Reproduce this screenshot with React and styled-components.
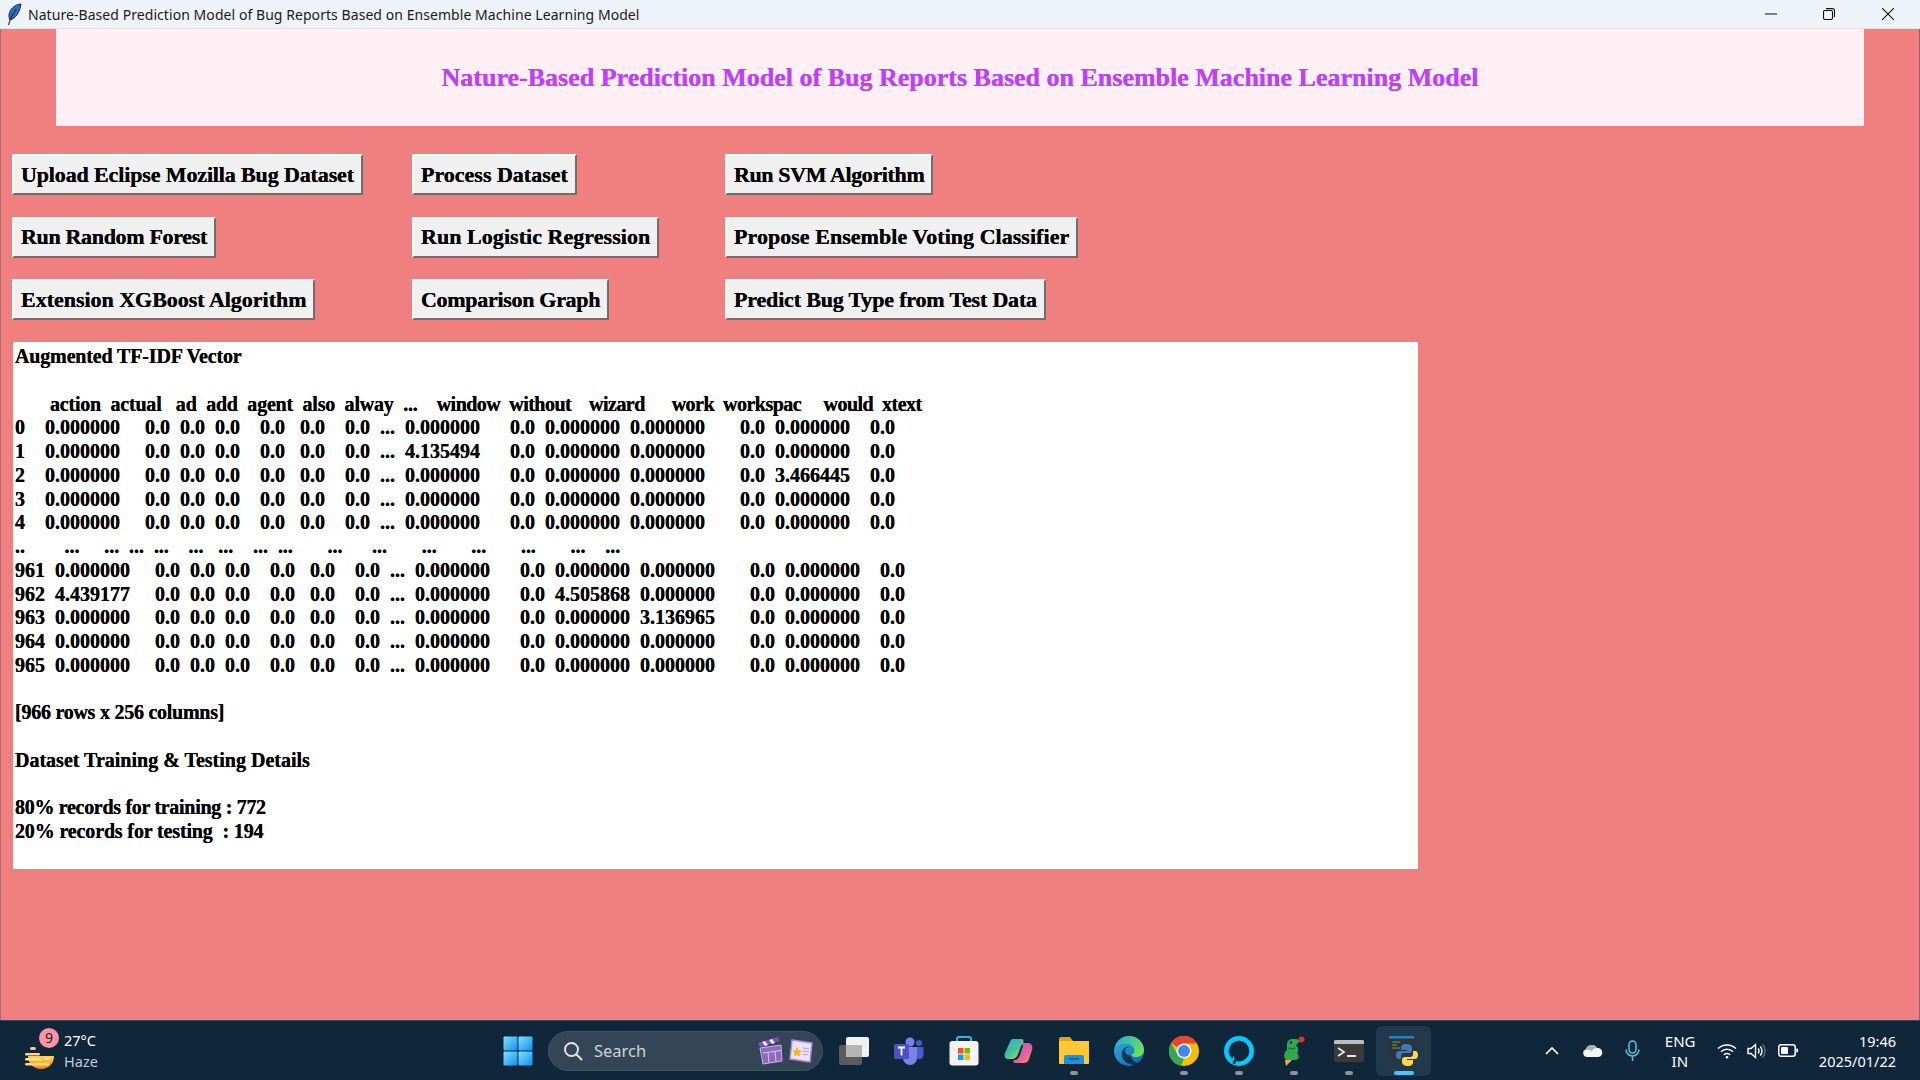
import React from "react";
import styled, { createGlobalStyle } from "styled-components";

const GlobalStyle = createGlobalStyle`
  html, body { margin: 0; padding: 0; }
  body { width: 1920px; height: 1080px; overflow: hidden; background: #f08080; }
  * { box-sizing: border-box; }
`;

const Page = styled.div`
  display: flex;
  flex-direction: column;
  width: 1920px;
  height: 1080px;
`;

/* window chrome */
const TitleBar = styled.div`
  display: flex;
  align-items: center;
  height: 29px;
  padding-left: 6px;
  background: #eef3fa;
  border-bottom: 1px solid #e2dfe8;
`;
const WindowTitle = styled.div`
  margin-left: 6px;
  flex: 1;
  font: 14px "Noto Sans", sans-serif;
  letter-spacing: 0.06px;
  color: #1a1a1a;
  white-space: nowrap;
`;
const WindowButton = styled.div`
  width: 58.5px;
  height: 29px;
  display: flex;
  align-items: center;
  justify-content: center;
`;
const WindowButtons = styled.div`
  display: flex;
  padding-right: 3px;
`;

/* tkinter window */
const Main = styled.div`
  flex: 1;
  background: #f08080;
  border-left: 1px solid #b06a6e;
  border-right: 1px solid #8a6668;
  padding-left: 11px;
`;
const Heading = styled.h1`
  margin: 0 0 28px 44px;
  width: 1808px;
  height: 97px;
  display: flex;
  align-items: center;
  justify-content: center;
  background: #fff0f5;
  color: #bf3eff;
  font: bold 26px "Liberation Serif", serif;
  text-shadow: 0 0 0.6px #bf3eff;
`;
const ButtonGrid = styled.div`
  display: grid;
  grid-template-columns: 400px 313px auto;
  grid-auto-rows: 41px;
  row-gap: 21.5px;
  justify-items: start;
`;
const TkButton = styled.button`
  height: 41px;
  padding: 0 7px;
  background: #f0f0f0;
  border: 2px solid;
  border-color: #fbfbfb #6e6e6e #6e6e6e #fbfbfb;
  color: #000;
  font: bold 22px "Liberation Serif", serif;
  letter-spacing: ${(p) => p.$track || 0}px;
  text-shadow: 0 0 0.3px #000;
  white-space: nowrap;
`;
const Output = styled.pre`
  margin: 22px 0 0 1px;
  width: 1405px;
  height: 527px;
  padding: 3px 2px;
  background: #fff;
  color: #000;
  font: bold 20px/23.75px "Liberation Serif", serif;
  text-shadow: 0 0 0.3px #000;
  overflow: hidden;
`;
const OutputLine = styled.span`
  display: block;
  min-height: 23.75px;
`;
const Tracked = styled.span`
  letter-spacing: ${(p) => p.$track || 0}px;
`;

/* taskbar */
const Taskbar = styled.div`
  height: 60px;
  display: grid;
  grid-template-columns: 490px auto 1fr;
  align-items: center;
  background: #10263a;
  border-top: 1px solid #39495a;
`;
const Weather = styled.div`
  display: flex;
  align-items: center;
  padding-left: 24px;
`;
const WeatherIcon = styled.div`
  position: relative;
  width: 40px;
  height: 40px;
  display: flex;
  align-items: flex-end;
`;
const Badge = styled.span`
  position: absolute;
  left: 15px;
  top: -3px;
  width: 20px;
  height: 20px;
  border-radius: 50%;
  background: #ff93a6;
  color: #1b1b1b;
  font: 14px/20px "Noto Sans", sans-serif;
  text-align: center;
`;
const WeatherText = styled.div`
  font: 14.5px/21px "Noto Sans", sans-serif;
  color: #fff;
  span { display: block; color: #c6ced6; }
`;
const Center = styled.div`
  display: flex;
  align-items: center;
`;
const TaskButton = styled.div`
  position: relative;
  width: ${(p) => p.$w || 55}px;
  height: 50px;
  display: flex;
  align-items: center;
  justify-content: center;
  border-radius: 6px;
  background: ${(p) => (p.$active ? "#22384b" : "transparent")};
`;
const RunDot = styled.i`
  position: absolute;
  bottom: 1px;
  left: 50%;
  transform: translateX(-50%);
  width: ${(p) => (p.$active ? 20 : 8)}px;
  height: 4px;
  border-radius: 2px;
  background: ${(p) => (p.$active ? "#4fc3f7" : "#8b949c")};
`;
const SearchBox = styled.div`
  width: 275px;
  height: 40px;
  margin: 0 3px 0 3px;
  padding: 0 9px 0 14px;
  display: flex;
  align-items: center;
  border-radius: 20px;
  background: #344656;
  border: 1px solid #42535f;
  color: #ccd3d9;
  font: 16.5px "Noto Sans", sans-serif;
  svg:last-child { margin-left: 6px; }
`;
const SearchLabel = styled.span`
  flex: 1;
  margin-left: 11px;
`;
const Tray = styled.div`
  display: flex;
  align-items: center;
  justify-content: flex-end;
  padding-right: 24px;
`;
const TraySlot = styled.div`
  display: flex;
  margin-left: ${(p) => p.$ml || 0}px;
`;
const Lang = styled.div`
  margin-left: 25px;
  width: 30px;
  font: 15px/20px "Noto Sans", sans-serif;
  color: #fff;
  text-align: center;
`;
const Clock = styled.div`
  margin-left: 21px;
  font: 14.5px/20px "Noto Sans", sans-serif;
  color: #fff;
  text-align: right;
`;

const buttons = [
  { label: "Upload Eclipse Mozilla Bug Dataset", track: -0.13 },
  { label: "Process Dataset", track: 0 },
  { label: "Run SVM Algorithm", track: -0.38 },
  { label: "Run Random Forest", track: -0.33 },
  { label: "Run Logistic Regression", track: 0.05 },
  { label: "Propose Ensemble Voting Classifier", track: 0.04 },
  { label: "Extension XGBoost Algorithm", track: -0.02 },
  { label: "Comparison Graph", track: -0.3 },
  { label: "Predict Bug Type from Test Data", track: -0.17 },
];

const row = (index, a, b, c, d, e) =>
  `${index}  ${a}     0.0  0.0  0.0    0.0   0.0    0.0  ...  ${b}      0.0  ${c}  ${d}       0.0  ${e}    0.0`;
const ZERO = "0.000000";

const outputLines = [
  { parts: [{ text: "Augmented TF-IDF Vector", track: -0.15 }] },
  { parts: [] },
  {
    parts: [
      { text: "       ", track: 0 },
      { text: "action  actual   ad  add  agent  also  alway  ...    ", track: -0.21 },
      { text: "window  without    wizard      work  workspac     would  xtext", track: -0.52 },
    ],
  },
  { parts: [{ text: row("0  ", ZERO, ZERO, ZERO, ZERO, ZERO) }] },
  { parts: [{ text: row("1  ", ZERO, "4.135494", ZERO, ZERO, ZERO) }] },
  { parts: [{ text: row("2  ", ZERO, ZERO, ZERO, ZERO, "3.466445") }] },
  { parts: [{ text: row("3  ", ZERO, ZERO, ZERO, ZERO, ZERO) }] },
  { parts: [{ text: row("4  ", ZERO, ZERO, ZERO, ZERO, ZERO) }] },
  { parts: [{ text: "..        ...     ...  ...  ...    ...   ...    ...  ...       ...      ...       ...       ...       ...       ...    ...", track: -0.04 }] },
  { parts: [{ text: row("961", ZERO, ZERO, ZERO, ZERO, ZERO) }] },
  { parts: [{ text: row("962", "4.439177", ZERO, "4.505868", ZERO, ZERO) }] },
  { parts: [{ text: row("963", ZERO, ZERO, ZERO, "3.136965", ZERO) }] },
  { parts: [{ text: row("964", ZERO, ZERO, ZERO, ZERO, ZERO) }] },
  { parts: [{ text: row("965", ZERO, ZERO, ZERO, ZERO, ZERO) }] },
  { parts: [] },
  { parts: [{ text: "[966 rows x 256 columns]", track: -0.25 }] },
  { parts: [] },
  { parts: [{ text: "Dataset Training & Testing Details" }] },
  { parts: [] },
  { parts: [{ text: "80% records for training : 772", track: -0.3 }] },
  { parts: [{ text: "20% records for testing  : 194", track: -0.14 }] },
];

function Feather() {
  return (
    <svg width="16" height="23" viewBox="0 0 16 23">
      <path d="M15 1C9 1.500 3.500 6 3 12c-.2 2 .3 3.500 1 5C9.500 15.500 14 9 15 1z" fill="#2a6fc4" stroke="#1c2b44" strokeWidth="1" />
      <path d="M10.500 6C7 10 4.500 15 2.500 22" fill="none" stroke="#1c2b44" strokeWidth="1.100" />
    </svg>
  );
}

function SunHaze() {
  return (
    <svg width="32" height="26" viewBox="0 0 32 26">
      <defs>
        <linearGradient id="sunGrad" x1="0" y1="0" x2="0" y2="1">
          <stop offset="0" stopColor="#ffd35c" />
          <stop offset="1" stopColor="#f58a14" />
        </linearGradient>
      </defs>
      <path d="M4 11h26c0 8-6 13-13 13S4 19 4 11z" fill="url(#sunGrad)" />
      <rect x="6" y="2" width="6" height="3" rx="1.5" fill="#f6cf62" />
      <rect x="1" y="8" width="15" height="2.6" rx="1.3" fill="#f8d977" />
      <rect x="1" y="13" width="16" height="2.6" rx="1.3" fill="#fbe08a" />
      <rect x="20" y="12.5" width="6" height="2.6" rx="1.3" fill="#fbe08a" />
      <rect x="1" y="18" width="24" height="2.6" rx="1.3" fill="#fbdc80" />
    </svg>
  );
}

function StartLogo() {
  return (
    <svg width="30" height="30" viewBox="0 0 30 30">
      <defs>
        <linearGradient id="startGrad" x1="0" y1="0" x2="1" y2="1">
          <stop offset="0" stopColor="#7fe6ff" />
          <stop offset="1" stopColor="#0e8cf2" />
        </linearGradient>
      </defs>
      <rect x="0.5" y="0.5" width="14" height="14" rx="1" fill="url(#startGrad)" />
      <rect x="15.5" y="0.5" width="14" height="14" rx="1" fill="url(#startGrad)" />
      <rect x="0.5" y="15.5" width="14" height="14" rx="1" fill="url(#startGrad)" />
      <rect x="15.5" y="15.5" width="14" height="14" rx="1" fill="url(#startGrad)" />
    </svg>
  );
}

function SearchGlass() {
  return (
    <svg width="20" height="20" viewBox="0 0 20 20" fill="none" stroke="#dfe4e8" strokeWidth="2" strokeLinecap="round">
      <circle cx="8.5" cy="8.5" r="6.5" />
      <path d="M13.5 13.5L18.5 18.5" />
    </svg>
  );
}

function Clapper() {
  return (
    <svg width="26" height="28" viewBox="0 0 26 28">
      <path d="M3 11l21-3 1 16-19 3z" fill="#8e6bc0" stroke="#c9b7e2" strokeWidth="1" />
      <path d="M6 16l18-2.5M11 15.5l1 10M18 14.5l1 10" stroke="#d9ccec" strokeWidth="1" fill="none" />
      <path d="M1 6l20-6 1.5 4L3 10.5z" fill="#7b52b4" />
      <path d="M5 5l3 4 3-1-3-4zM12 3l3 4 3-1-3-4z" fill="#f0eaf8" />
    </svg>
  );
}

function NewsCard() {
  return (
    <svg width="24" height="24" viewBox="0 0 24 24">
      <path d="M3 1l20 3-2 19-20-3z" fill="#ece2f6" stroke="#a78bcf" strokeWidth="1.5" />
      <path d="M8 8l1.6 3.2 3.4.5-2.5 2.4.6 3.4L8 16l-3 1.5.6-3.4L3.2 11.7l3.3-.5z" fill="#f6b321" />
      <path d="M14 9l6 1M14 12l6 1M13.5 15l6 1" stroke="#b59ed6" strokeWidth="1.2" />
    </svg>
  );
}

function TaskView() {
  return (
    <svg width="30" height="28" viewBox="0 0 30 28">
      <rect x="0" y="8" width="23" height="20" rx="2" fill="#5b5b5b" />
      <rect x="7" y="0" width="23" height="20" rx="2" fill="#f1f1f1" />
      <rect x="7" y="8" width="16" height="12" fill="#b5b5b5" />
    </svg>
  );
}

function Teams() {
  return (
    <svg width="30" height="28" viewBox="0 0 30 28">
      <circle cx="16" cy="5" r="4.5" fill="#7b83eb" />
      <circle cx="25" cy="6" r="3" fill="#5059c9" />
      <path d="M21 10h8.5v8a4.5 4.5 0 0 1-6 4z" fill="#5059c9" />
      <path d="M9 10h14v11a7 7 0 0 1-14 0z" fill="#7b83eb" />
      <rect x="0" y="7" width="15" height="15" rx="1.5" fill="#4b53bc" />
      <path d="M4 10.5h7M7.5 10.5v8" stroke="#fff" strokeWidth="1.8" />
    </svg>
  );
}

function Store() {
  return (
    <svg width="30" height="30" viewBox="0 0 30 30">
      <path d="M8 6V3a2 2 0 0 1 2-2h10a2 2 0 0 1 2 2v3" fill="none" stroke="#2bb5ee" strokeWidth="2" />
      <rect x="0.5" y="5" width="29" height="24.5" rx="3" fill="#f4f4f4" />
      <rect x="9" y="12" width="5.5" height="5.5" fill="#f25022" />
      <rect x="15.5" y="12" width="5.5" height="5.5" fill="#7fba00" />
      <rect x="9" y="18.5" width="5.5" height="5.5" fill="#00a4ef" />
      <rect x="15.5" y="18.5" width="5.5" height="5.5" fill="#ffb900" />
    </svg>
  );
}

function Copilot() {
  return (
    <svg width="29" height="26" viewBox="0 0 29 26">
      <defs>
        <linearGradient id="copA" x1="0" y1="0" x2="1" y2="1">
          <stop offset="0" stopColor="#2aa7e8" />
          <stop offset="0.55" stopColor="#49c58f" />
          <stop offset="1" stopColor="#f4d23c" />
        </linearGradient>
        <linearGradient id="copB" x1="0" y1="0" x2="1" y2="1">
          <stop offset="0" stopColor="#a65be0" />
          <stop offset="0.6" stopColor="#e8609c" />
          <stop offset="1" stopColor="#f6a04a" />
        </linearGradient>
      </defs>
      <path d="M9 1h8c3 0 3 2 2 5l-2 2-3 8c-1 3-3 5-6 5H4c-3 0-4-3-3-6L6 4c.6-2 1.500-3 3-3z" fill="url(#copA)" />
      <path d="M19 5h5c4 0 5 4 4 7l-3 9c-1 3-3 4-6 4h-8c-2 0-2-2-1-3 3 0 5-2 6-5l3-9z" fill="url(#copB)" />
    </svg>
  );
}

function Folder() {
  return (
    <svg width="30" height="27" viewBox="0 0 30 27">
      <path d="M0 2a2 2 0 0 1 2-2h9l3 4h16v6H0z" fill="#e3a614" />
      <rect x="0" y="4" width="30" height="23" rx="1" fill="#fcc934" />
      <path d="M5 27v-7a2 2 0 0 1 2-2h16a2 2 0 0 1 2 2v7z" fill="#1d8fe0" />
      <rect x="10" y="21" width="10" height="1.6" fill="#0c5ea8" />
    </svg>
  );
}

function Edge() {
  return (
    <svg width="30" height="30" viewBox="0 0 30 30">
      <defs>
        <linearGradient id="edgeBlue" x1="0" y1="0" x2="1" y2="1">
          <stop offset="0" stopColor="#2fb3e8" />
          <stop offset="1" stopColor="#0b5fae" />
        </linearGradient>
        <linearGradient id="edgeGreen" x1="0" y1="0" x2="1" y2="0.6">
          <stop offset="0" stopColor="#1fa7d8" />
          <stop offset="1" stopColor="#6ee05a" />
        </linearGradient>
      </defs>
      <circle cx="15" cy="15" r="15" fill="url(#edgeBlue)" />
      <path d="M1 12C3 4 9 0 15 0c9 0 15 7 15 14 0 5-4 7-8 7-3 0-5-1-5-2 3-1 4-3 3-6-1-4-6-6-11-5-4 1-7 2-8 4z" fill="url(#edgeGreen)" />
      <path d="M17 19c-3 1-6-1-6-4 0-2 2-4 5-4-5-1-9 3-8 9 1 5 6 9 13 9 3 0 5-1 7-3-5 2-10 0-11-7z" fill="#10263a" opacity="0.85" />
    </svg>
  );
}

function Chrome() {
  return (
    <svg width="30" height="30" viewBox="0 0 30 30">
      <circle cx="15" cy="15" r="15" fill="#fbbc04" />
      <path d="M15 0a15 15 0 0 1 13 7.5H15a7.5 7.5 0 0 0-6.5 3.75L2 7A15 15 0 0 1 15 0z" fill="#ea4335" />
      <path d="M2 7l6.5 11.25A7.5 7.5 0 0 0 15 22.5L8.5 28A15 15 0 0 1 2 7z" fill="#34a853" />
      <path d="M8.5 18.25L15 22.5l-3 7.300A15 15 0 0 1 1.5 21.5z" fill="#34a853" />
      <circle cx="15" cy="15" r="7.5" fill="#fff" />
      <circle cx="15" cy="15" r="6" fill="#4285f4" />
    </svg>
  );
}

function Alexa() {
  return (
    <svg width="30" height="30" viewBox="0 0 30 30">
      <circle cx="15" cy="15" r="12.7" fill="none" stroke="#00caff" strokeWidth="4.6" />
      <path d="M8 25l4-1.5-3-3.5z" fill="#00caff" />
      <path d="M8.5 27.5L11 21l2 2-2 5z" fill="#10263a" />
    </svg>
  );
}

function Parrot() {
  return (
    <svg width="24" height="30" viewBox="0 0 24 30">
      <circle cx="19.5" cy="3.5" r="3" fill="#d8342c" />
      <path d="M5 8a5 5 0 0 1 5-5h4a5 5 0 0 1 3.5 2.5L14 9c2 2 3 6 1 8 3 3 2 7-2 7H4c-3-3-2-8 1-10z" fill="#2fa84f" />
      <circle cx="9" cy="6.5" r="1.2" fill="#123" />
      <path d="M6 12c3 1 5 1 7 0" stroke="#1d7a38" strokeWidth="1.5" fill="none" />
      <path d="M3 24h7l-6 6z" fill="#e8b23c" />
    </svg>
  );
}

function Terminal() {
  return (
    <svg width="30" height="22" viewBox="0 0 30 22">
      <rect width="30" height="22" rx="1.5" fill="#3a3a3a" />
      <path d="M0 1.5A1.5 1.5 0 0 1 1.5 0h27A1.5 1.5 0 0 1 30 1.5V4H0z" fill="#bdbdbd" />
      <path d="M4 8l6 4-6 4" fill="none" stroke="#e6e6e6" strokeWidth="1.8" />
      <rect x="13" y="15" width="9" height="2" fill="#e6e6e6" />
    </svg>
  );
}

function PythonApp() {
  return (
    <svg width="30" height="30" viewBox="0 0 30 30">
      <rect x="0" y="0" width="25" height="23" fill="#30343a" />
      <rect x="0" y="0" width="25" height="2.5" fill="#2d7fc4" />
      <path d="M3 6h8M3 9h5M3 12h8" stroke="#4caf50" strokeWidth="1" />
      <path d="M17 8c-4 0-5 2-5 4v2h6v1h-8c-2 0-3 2-3 4s1 4 3 4h2v-3c0-2 1-3 3-3h5c2 0 3-1 3-3v-2c0-2-2-4-6-4z" fill="#3d7cb5" />
      <path d="M19 30c4 0 5-2 5-4v-2h-6v-1h8c2 0 3-2 3-4s-1-4-3-4h-2v3c0 2-1 3-3 3h-5c-2 0-3 1-3 3v2c0 2 2 4 6 4z" fill="#ffd84a" />
    </svg>
  );
}

function Chevron() {
  return (
    <svg width="14" height="8" viewBox="0 0 14 8" fill="none" stroke="#fff" strokeWidth="1.7">
      <path d="M1 7l6-6 6 6" />
    </svg>
  );
}

function Cloud() {
  return (
    <svg width="21" height="13" viewBox="0 0 21 13">
      <path d="M5 13a4 4 0 0 1-1-7.8A6 6 0 0 1 15 4a4.5 4.5 0 0 1 1.5 9z" fill="#f4f4f4" />
      <path d="M4 5.2A6 6 0 0 1 15 4c-2 0-4 1-5 3-2-1-4-1-6-1.800z" fill="#a9b0b6" />
    </svg>
  );
}

function Mic() {
  return (
    <svg width="15" height="21" viewBox="0 0 15 21" fill="none" stroke="#5fc4de" strokeWidth="1.5">
      <rect x="4" y="1" width="7" height="12" rx="3.5" />
      <path d="M1 9.500a6.500 6.500 0 0 0 13 0M7.500 16v5" />
    </svg>
  );
}

function Wifi() {
  return (
    <svg width="20" height="16" viewBox="0 0 20 16" fill="none" stroke="#fff" strokeWidth="1.5">
      <path d="M1 5.500a13 13 0 0 1 18 0M4 8.800a8.500 8.500 0 0 1 12 0M6.800 11.800a4.500 4.500 0 0 1 6.400 0" />
      <circle cx="10" cy="14.300" r="1.300" fill="#fff" stroke="none" />
    </svg>
  );
}

function Speaker() {
  return (
    <svg width="20" height="16" viewBox="0 0 20 16" fill="none" stroke="#fff" strokeWidth="1.4">
      <path d="M1 5.500h3l4.500-4v13L4 10.500H1z" />
      <path d="M11 5.500a3.500 3.500 0 0 1 0 5M13.200 3.500a6.500 6.500 0 0 1 0 9" />
      <path d="M15.500 1.500a9.500 9.500 0 0 1 0 13" stroke="#66717b" />
    </svg>
  );
}

function Battery() {
  return (
    <svg width="20" height="13" viewBox="0 0 20 13">
      <rect x="0.750" y="0.750" width="16.500" height="11.500" rx="2.500" fill="none" stroke="#fff" strokeWidth="1.500" />
      <rect x="3" y="3" width="7" height="7" rx="1" fill="#fff" />
      <rect x="18.300" y="4.500" width="1.700" height="4" rx="0.800" fill="#fff" />
    </svg>
  );
}

export default function App() {
  return (
    <Page>
      <GlobalStyle />
      <TitleBar>
        <Feather />
        <WindowTitle>Nature-Based Prediction Model of Bug Reports Based on Ensemble Machine Learning Model</WindowTitle>
        <WindowButtons>
          <WindowButton>
            <svg width="12" height="12" viewBox="0 0 12 12" stroke="#111" strokeWidth="1"><path d="M0 6h12" /></svg>
          </WindowButton>
          <WindowButton>
            <svg width="12" height="12" viewBox="0 0 12 12" fill="none" stroke="#111" strokeWidth="1.100">
              <rect x="0.500" y="2.500" width="9" height="9" rx="1.500" />
              <path d="M3 0.600h6.500A2 2 0 0 1 11.500 2.600V9" />
            </svg>
          </WindowButton>
          <WindowButton>
            <svg width="12" height="12" viewBox="0 0 12 12" stroke="#111" strokeWidth="1.100"><path d="M0 0l12 12M12 0L0 12" /></svg>
          </WindowButton>
        </WindowButtons>
      </TitleBar>

      <Main>
        <Heading>Nature-Based Prediction Model of Bug Reports Based on Ensemble Machine Learning Model</Heading>
        <ButtonGrid>
          {buttons.map((b) => (
            <TkButton key={b.label} $track={b.track}>{b.label}</TkButton>
          ))}
        </ButtonGrid>
        <Output>
          {outputLines.map((line, index) => (
            <OutputLine key={index}>
              {line.parts.map((part, i) => (
                <Tracked key={i} $track={part.track}>{part.text}</Tracked>
              ))}
            </OutputLine>
          ))}
        </Output>
      </Main>

      <Taskbar>
        <Weather>
          <WeatherIcon>
            <SunHaze />
            <Badge>9</Badge>
          </WeatherIcon>
          <WeatherText>
            27°C
            <span>Haze</span>
          </WeatherText>
        </Weather>

        <Center>
          <TaskButton><StartLogo /></TaskButton>
          <SearchBox>
            <SearchGlass />
            <SearchLabel>Search</SearchLabel>
            <Clapper />
            <NewsCard />
          </SearchBox>
          <TaskButton><TaskView /></TaskButton>
          <TaskButton><Teams /></TaskButton>
          <TaskButton><Store /></TaskButton>
          <TaskButton><Copilot /></TaskButton>
          <TaskButton><Folder /><RunDot /></TaskButton>
          <TaskButton><Edge /></TaskButton>
          <TaskButton><Chrome /><RunDot /></TaskButton>
          <TaskButton><Alexa /><RunDot /></TaskButton>
          <TaskButton><Parrot /><RunDot /></TaskButton>
          <TaskButton><Terminal /><RunDot /></TaskButton>
          <TaskButton $active><PythonApp /><RunDot $active /></TaskButton>
        </Center>

        <Tray>
          <TraySlot><Chevron /></TraySlot>
          <TraySlot $ml={23}><Cloud /></TraySlot>
          <TraySlot $ml={22}><Mic /></TraySlot>
          <Lang>ENG<br />IN</Lang>
          <TraySlot $ml={22}><Wifi /></TraySlot>
          <TraySlot $ml={10}><Speaker /></TraySlot>
          <TraySlot $ml={11}><Battery /></TraySlot>
          <Clock>19:46<br />2025/01/22</Clock>
        </Tray>
      </Taskbar>
    </Page>
  );
}
